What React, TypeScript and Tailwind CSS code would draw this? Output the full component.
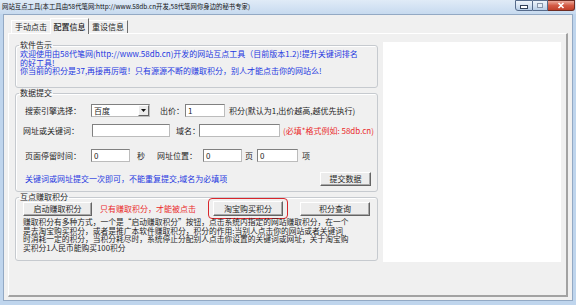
import React from 'react';

const Button = ({ className, children }: { className: string; children: React.ReactNode }) => (
  <div
    className={`flex items-center justify-center bg-[#ececec] border border-t-white border-l-white border-r-[#646464] border-b-[#646464] shadow-[inset_-1px_-1px_0_#a8a8a8] leading-none whitespace-nowrap ${className}`}
  >
    {children}
  </div>
);

const Field = ({ className, value }: { className: string; value?: string }) => (
  <div
    className={`h-[13px] shrink-0 bg-white border border-[#bcbcbc] border-t-[#808080] border-l-[#808080] pl-[2px] leading-[11px] ${className}`}
  >
    {value}
  </div>
);

const Group = ({ title, className, children }: { title: string; className: string; children: React.ReactNode }) => (
  <fieldset className={`border border-[#c6cacf] rounded-[3px] shadow-[inset_1px_1px_0_#ffffff] ${className}`}>
    <legend className="ml-[3px] px-[1px] leading-[10px]">{title}</legend>
    {children}
  </fieldset>
);

export default function App() {
  return (
    <div className="w-[576px] h-[305px] overflow-hidden bg-[#bfd5ed] flex flex-col font-['Noto_Sans_CJK_SC',sans-serif] text-[8px] text-[#1e1e1e]">
      {/* title bar */}
      <div className="h-[14px] shrink-0 flex items-start pl-[2px] bg-gradient-to-b from-[#e0ebf7] to-[#c7daef]">
        <span className="mt-[2px] text-[6.4px] leading-[9px] whitespace-nowrap text-[#121212]">
          网站互点工具(本工具由58代笔网:http://www.58db.cn开发,58代笔网你身边的秘书专家)
        </span>
        <div className="ml-auto mr-[1px] flex h-[11px]">
          <div className="w-[18px] rounded-bl-[3px] border border-[#566b8b] bg-gradient-to-b from-[#eef4fb] via-[#d6e3f2] to-[#b7cde7] flex items-end justify-center pb-[2px]">
            <div className="w-[6px] h-[2px] bg-white outline outline-1 outline-[#33425a]" />
          </div>
          <div className="w-[15px] border-y border-r border-[#566b8b] bg-gradient-to-b from-[#eef4fb] via-[#d6e3f2] to-[#b7cde7] flex items-center justify-center">
            <div className="w-[6px] h-[5px] border border-[#8795aa] bg-[#e6eef8]" />
          </div>
          <div className="w-[27px] rounded-br-[3px] border-y border-r border-[#6d2b21] bg-gradient-to-b from-[#eaa99b] via-[#d35a45] to-[#c23f29] flex items-center justify-center">
            <svg width="8" height="7" viewBox="0 0 8 7">
              <path d="M1.5 1 L6.5 6 M6.5 1 L1.5 6" stroke="#ffffff" strokeWidth="1.6" />
            </svg>
          </div>
        </div>
      </div>

      {/* client area */}
      <div className="mx-[3px] h-[287px] shrink-0 bg-[#f0f0f0] border border-[#93a9c4] flex flex-col">
        {/* tabs */}
        <div className="h-[18px] shrink-0 flex items-end pl-[7px]">
          <div className="w-[39px] h-[13px] flex items-center justify-center border-t border-l border-white">手动点击</div>
          <div className="relative z-10 w-[39px] h-[16px] mb-[-1px] bg-[#f0f0f0] flex items-start justify-center pt-[2px] border-t border-l border-white border-r border-r-[#6f6f6f] font-medium">
            配置信息
          </div>
          <div className="w-[39px] h-[13px] flex items-center justify-center border-t border-white border-r border-r-[#6f6f6f]">重设信息</div>
        </div>

        {/* tab page */}
        <div className="mx-[4px] h-[264px] shrink-0 flex pl-[6px] pt-[6px] border-t border-l border-white border-r-2 border-b-2 border-r-[#a2a2a2] border-b-[#a2a2a2]">
          <div className="w-[363px] shrink-0 flex flex-col">
            <Group title="软件告示" className="h-[48px]">
              <div className="pl-[4px] leading-[8.5px] text-[#2437e0] whitespace-nowrap">
                <div>欢迎使用由58代笔网(http://www.58db.cn)开发的网站互点工具（目前版本1.2)!提升关键词排名</div>
                <div>的好工具!</div>
                <div>你当前的积分是37,再接再厉哦！只有源源不断的赚取积分，别人才能点击你的网站么!</div>
              </div>
            </Group>

            <Group title="数据提交" className="h-[104px]">
              <div className="pl-[9px] flex flex-col whitespace-nowrap">
                <div className="mt-[6px] h-[13px] flex items-center">
                  <span className="w-[66px] shrink-0">搜索引擎选择：</span>
                  <div className="w-[59px] h-[13px] flex bg-white border border-[#bcbcbc] border-t-[#808080] border-l-[#808080]">
                    <span className="flex-1 pl-[2px] leading-[11px]">百度</span>
                    <div className="w-[11px] flex items-center justify-center bg-[#ececec] border border-t-white border-l-white border-r-[#646464] border-b-[#646464]">
                      <svg width="5" height="3" viewBox="0 0 5 3">
                        <path d="M0 0 L5 0 L2.5 3 Z" fill="#111111" />
                      </svg>
                    </div>
                  </div>
                  <span className="ml-[10px] w-[25px] shrink-0">出价：</span>
                  <Field className="w-[40px]" value="1" />
                  <span className="ml-[4px]">积分(默认为1,出价越高,越优先执行)</span>
                </div>

                <div className="mt-[7px] h-[13px] flex items-center">
                  <span className="ml-[-2px] w-[69px] shrink-0">网址或关键词：</span>
                  <Field className="w-[78px]" />
                  <span className="ml-[6px] w-[23px] shrink-0">域名：</span>
                  <Field className="w-[81px]" />
                  <span className="ml-[3px] text-[#ea2a2a]">(必填*格式例如: 58db.cn)</span>
                </div>

                <div className="mt-[12px] h-[13px] flex items-center">
                  <span className="w-[66px] shrink-0">页面停留时间：</span>
                  <Field className="w-[39px]" value="0" />
                  <span className="ml-[7px]">秒</span>
                  <span className="ml-[12px] w-[46px] shrink-0">网址位置：</span>
                  <Field className="w-[39px]" value="0" />
                  <span className="ml-[3px]">页</span>
                  <Field className="ml-[4px] w-[41px]" value="0" />
                  <span className="ml-[4px]">项</span>
                </div>

                <div className="mt-[10px] h-[14px] flex items-center">
                  <span className="text-[#2437e0]">关键词或网址提交一次即可，不能重复提交,域名为必填项</span>
                  <Button className="ml-auto mr-[6px] w-[51px] h-[14px]">提交数据</Button>
                </div>
              </div>
            </Group>

            <Group title="互点赚取积分" className="h-[69px]">
              <div className="mt-[-4px] h-[21px] pl-[7px] flex items-center whitespace-nowrap">
                <Button className="w-[69px] h-[14px]">启动赚取积分</Button>
                <span className="ml-[8px] text-[#ea2a2a]">只有赚取积分，才能被点击</span>
                <div className="ml-[12px] w-[80px] h-[21px] rounded-[4px] border-[1.5px] border-[#d9262b] flex items-center justify-center">
                  <Button className="w-[70px] h-[15px]">淘宝购买积分</Button>
                </div>
                <Button className="ml-[12px] w-[70px] h-[14px]">积分查询</Button>
              </div>
              <div className="mt-[-1px] pl-[7px] text-[7.75px] leading-[8.5px] whitespace-nowrap">
                <div>赚取积分有多种方式，一个是“启动赚取积分”按钮，点击系统内指定的网站赚取积分，在一个</div>
                <div>是去淘宝购买积分，或者是推广本软件赚取积分，积分的作用:当别人点击你的网站或者关键词</div>
                <div>时消耗一定的积分，当积分耗尽时，系统停止分配别人点击你设置的关键词或网址，关于淘宝购</div>
                <div>买积分1人民币能购买100积分</div>
              </div>
            </Group>
          </div>

          <div className="ml-[5px] mt-[2px] w-[178px] h-[220px] shrink-0 bg-white" />
        </div>
      </div>
    </div>
  );
}
